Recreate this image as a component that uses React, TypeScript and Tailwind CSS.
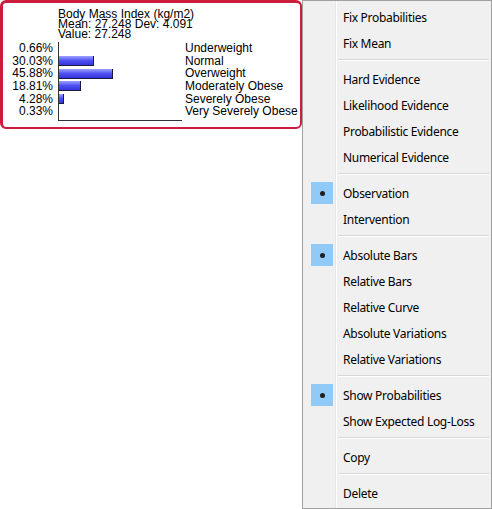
const rows = [
  { pct: '0.66%', value: 0.66, label: 'Underweight' },
  { pct: '30.03%', value: 30.03, label: 'Normal' },
  { pct: '45.88%', value: 45.88, label: 'Overweight' },
  { pct: '18.81%', value: 18.81, label: 'Moderately Obese' },
  { pct: '4.28%', value: 4.28, label: 'Severely Obese' },
  { pct: '0.33%', value: 0.33, label: 'Very Severely Obese' },
];

type MenuEntry = { label: string; checked?: boolean } | 'sep';

const menu: MenuEntry[] = [
  { label: 'Fix Probabilities' },
  { label: 'Fix Mean' },
  'sep',
  { label: 'Hard Evidence' },
  { label: 'Likelihood Evidence' },
  { label: 'Probabilistic Evidence' },
  { label: 'Numerical Evidence' },
  'sep',
  { label: 'Observation', checked: true },
  { label: 'Intervention' },
  'sep',
  { label: 'Absolute Bars', checked: true },
  { label: 'Relative Bars' },
  { label: 'Relative Curve' },
  { label: 'Absolute Variations' },
  { label: 'Relative Variations' },
  'sep',
  { label: 'Show Probabilities', checked: true },
  { label: 'Show Expected Log-Loss' },
  'sep',
  { label: 'Copy' },
  'sep',
  { label: 'Delete' },
];

function NodeCard() {
  return (
    <div className="h-[129px] w-[302px] shrink-0 rounded-[6px] border-[3px] border-r-2 border-b-2 border-[#cc1e3c] bg-white font-['Liberation_Sans',Arial,sans-serif] text-[12px] text-black">
      <div className="ml-[55px] mt-[6px] leading-[10px]">
        <div>Body Mass Index (kg/m2)</div>
        <div>Mean: 27.248 Dev: 4.091</div>
        <div>Value: 27.248</div>
      </div>
      <div className="mt-[3px] flex">
        <div className="w-[50px] text-right">
          {rows.map((r) => (
            <div key={r.pct} className="h-[12.7px] leading-[12.7px]">
              {r.pct}
            </div>
          ))}
        </div>
        <div className="ml-[5px] w-[124px] border-b border-l border-[#333] pb-[2px]">
          {rows.map((r) => {
            const w = Math.round(r.value * 1.18);
            return (
              <div key={r.label} className="flex h-[12.7px] items-center">
                {w >= 2 && (
                  <div
                    className="h-[10px] border-b border-r border-[#1a1a40] bg-linear-to-b from-[#a0a0ff] via-[#5050f2] to-[#3434da]"
                    style={{ width: w }}
                  />
                )}
              </div>
            );
          })}
        </div>
        <div className="ml-[3px]">
          {rows.map((r) => (
            <div key={r.label} className="h-[12.7px] leading-[12.7px] whitespace-nowrap">
              {r.label}
            </div>
          ))}
        </div>
      </div>
    </div>
  );
}

function ContextMenu() {
  return (
    <div className="h-[509px] w-[190px] shrink-0 border border-[#a0a0a0] bg-[#f0f0f0] bg-[linear-gradient(to_right,transparent_32px,#e6e6e6_32px,#e6e6e6_33px,#ffffff_33px,#ffffff_34px,transparent_34px)] py-[3px] font-['Noto_Sans',sans-serif] text-[12px] tracking-[-0.3px] text-black">
      {menu.map((item, i) =>
        item === 'sep' ? (
          <div key={i} className="h-[10px] pt-[3px]">
            <div className="ml-[35px] mr-[2px] h-px bg-[#d7d7d7]" />
            <div className="ml-[35px] mr-[2px] h-px bg-white" />
          </div>
        ) : (
          <div key={i} className="flex h-[26px] items-center">
            <div className="flex w-[40px] shrink-0 pl-[8px]">
              {item.checked && (
                <div className="flex h-[22px] w-[22px] items-center justify-center bg-[#91c9f7]">
                  <div className="h-[5px] w-[5px] rounded-full bg-[#1e1e1e]" />
                </div>
              )}
            </div>
            <span className="mt-[2px] whitespace-nowrap">{item.label}</span>
          </div>
        )
      )}
    </div>
  );
}

export default function App() {
  return (
    <div className="flex h-[509px] w-[492px] items-start justify-between bg-white">
      <NodeCard />
      <ContextMenu />
    </div>
  );
}
